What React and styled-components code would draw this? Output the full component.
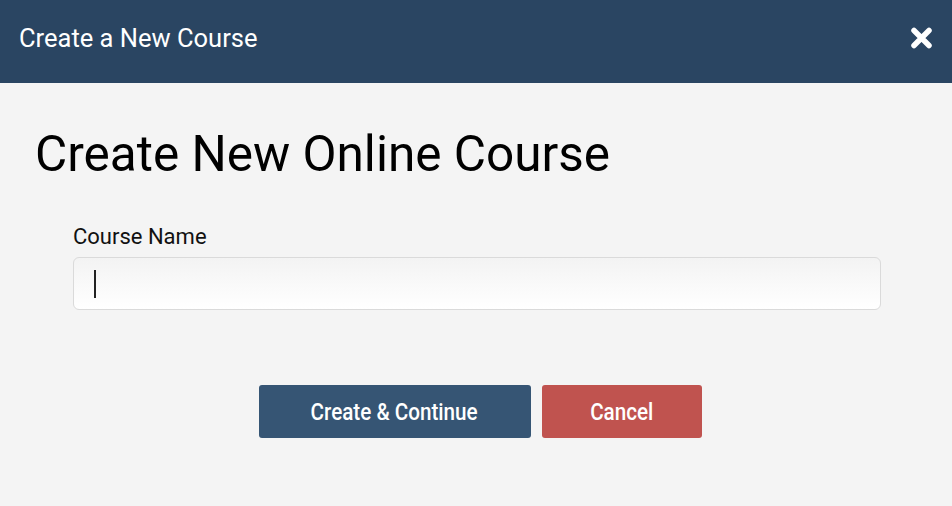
import React from 'react'
import styled, { createGlobalStyle } from 'styled-components'

const GlobalStyle = createGlobalStyle`
body {
  margin: 0;
  background: #f4f4f4;
  font-family: Roboto, "Liberation Sans", sans-serif;
}
`;

const Modal = styled.div`
width: 952px;
height: 506px;
background: #f4f4f4;
display: flex;
flex-direction: column;
`;

const Header = styled.div`
height: 83px;
background: #2a4562;
display: flex;
align-items: center;
justify-content: space-between;
padding: 0 19px 7px;
box-sizing: border-box;
`;

const HeaderTitle = styled.h2`
margin: 0;
color: #fff;
font-size: 25.5px;
font-weight: 400;
`;

const Close = styled.button`
border: 0;
background: none;
padding: 0;
display: flex;
cursor: pointer;
`;

const Body = styled.div`
padding: 42px 35px 0;
`;

const Heading = styled.h1`
margin: 0;
font-size: 49.5px;
font-weight: 400;
color: #000;
`;

const Field = styled.div`
margin: 41px 0 0 38px;
width: 808px;
display: flex;
flex-direction: column;
`;

const Label = styled.label`
font-size: 22px;
color: #111;
margin-bottom: 8px;
`;

const InputWrap = styled.div`
position: relative;
`;

const Input = styled.input`
width: 100%;
height: 53px;
box-sizing: border-box;
border: 1px solid #dadada;
border-radius: 6px;
background: linear-gradient(#f3f3f3, #ffffff);
padding: 0 20px;
font-size: 26px;
font-family: Roboto, sans-serif;
caret-color: transparent;
outline: none;
display: block;
`;

const Caret = styled.span`
position: absolute;
left: 21px;
top: 13px;
width: 2px;
height: 28px;
background: #222;
pointer-events: none;
`;

const Actions = styled.div`
display: flex;
justify-content: center;
gap: 11px;
margin-top: 75px;
padding-left: 8px;
`;

const Button = styled.button`
height: 53px;
width: ${p => p.w}px;
border: 0;
border-radius: 3px;
background: ${p => p.bg};
color: #fff;
font-family: Roboto, sans-serif;
font-size: 24px;
font-weight: 500;
cursor: pointer;
padding: 0;
`;

const ButtonText = styled.span`
display: inline-block;
transform: scaleX(0.86);
white-space: nowrap;
`;

export default function App() {
  return (
    <>
      <GlobalStyle />
      <Modal>
        <Header>
          <HeaderTitle>Create a New Course</HeaderTitle>
          <Close aria-label="close">
            <svg width="23" height="22" viewBox="0 0 23 22">
              <path d="M4 3.5 L19 18.5 M19 3.5 L4 18.5" stroke="#fff" strokeWidth="5.5" strokeLinecap="round" />
            </svg>
          </Close>
        </Header>
        <Body>
          <Heading>Create New Online Course</Heading>
          <Field>
            <Label>Course Name</Label>
            <InputWrap>
              <Input />
              <Caret />
            </InputWrap>
          </Field>
          <Actions>
            <Button w={272} bg="#365574"><ButtonText>Create &amp; Continue</ButtonText></Button>
            <Button w={160} bg="#c0534f"><ButtonText>Cancel</ButtonText></Button>
          </Actions>
        </Body>
      </Modal>
    </>
  )
}
